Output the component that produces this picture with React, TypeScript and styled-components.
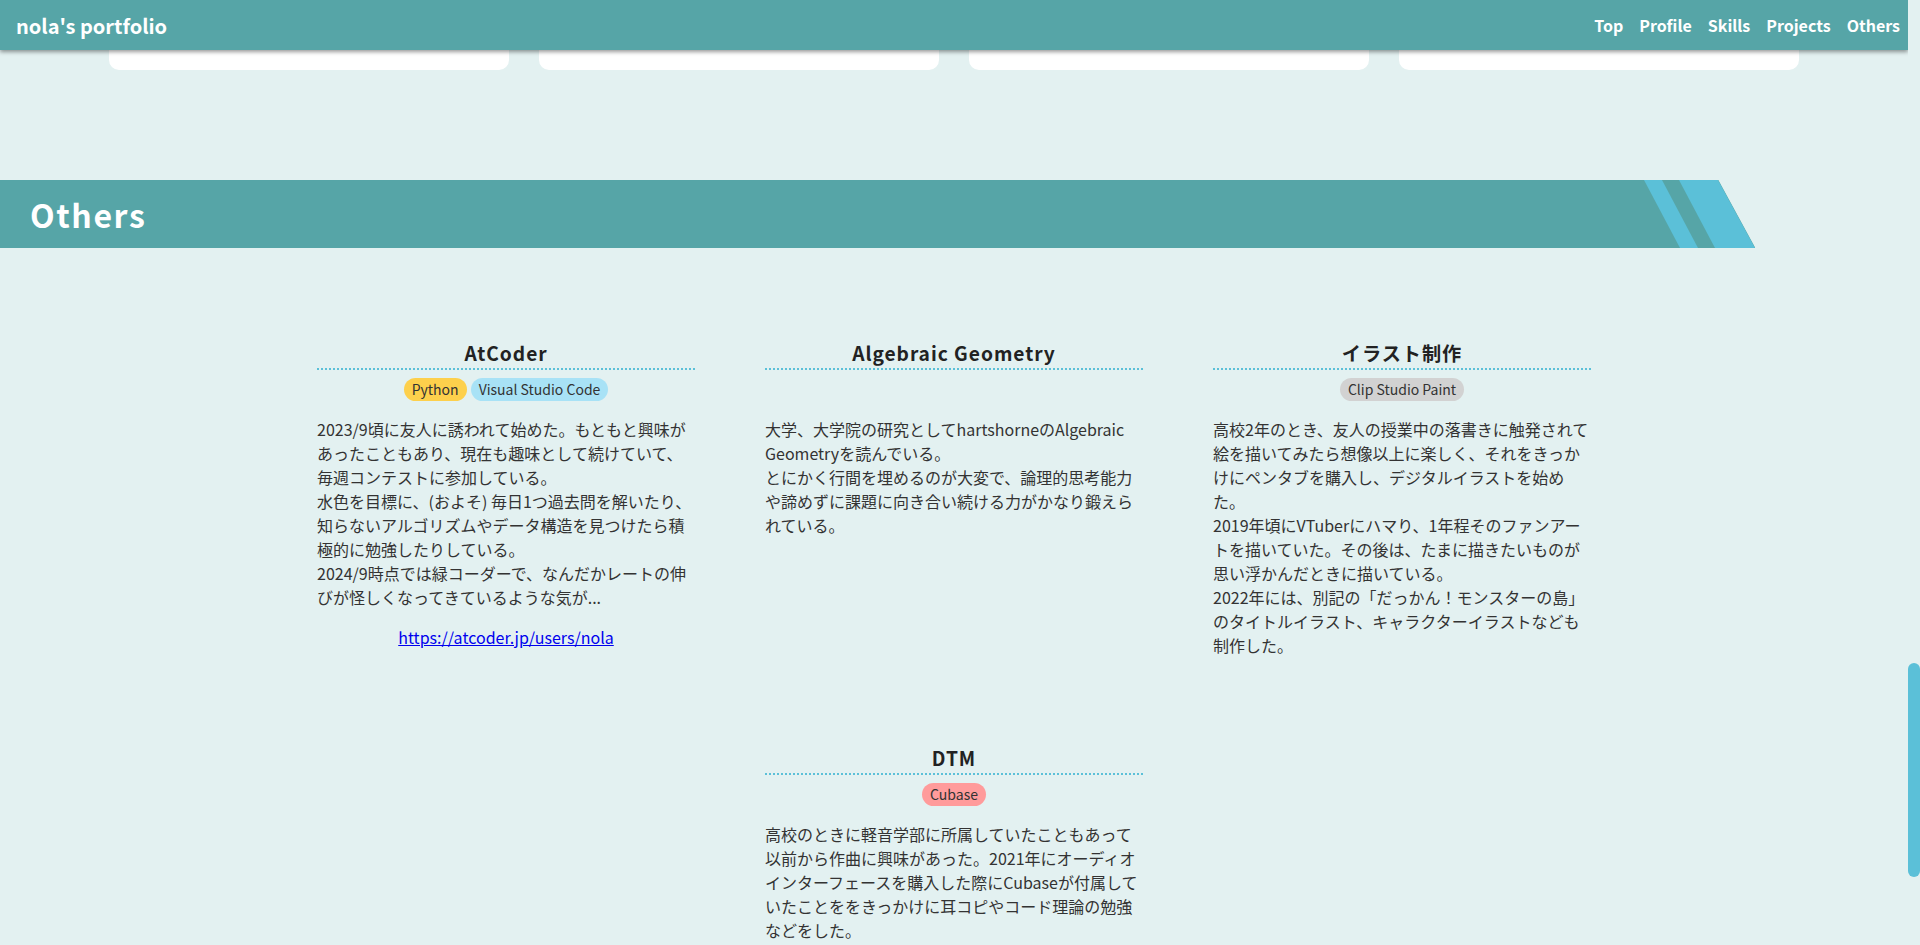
import React from "react";
import styled, { createGlobalStyle } from "styled-components";

const TEAL = "#56a5a7";
const BLUE = "#5bc0d8";
const BG = "#e3f1f1";

const GlobalStyle = createGlobalStyle`
  html, body {
    margin: 0;
    padding: 0;
    height: 100%;
    overflow: hidden;
    background: ${BG};
  }
  body {
    font-family: "Noto Sans CJK JP", "Noto Sans", sans-serif;
    color: #333;
  }
  #root { height: 100%; }
  * { box-sizing: border-box; }
`;

const Frame = styled.div`
  display: flex;
  height: 100vh;
  overflow: hidden;
  background: ${BG};
`;

const Page = styled.main`
  flex: 1;
  min-width: 0;
  overflow: hidden;
`;

const ScrollTrack = styled.div`
  flex: none;
  width: 12px;
  background: ${BG};
`;

const Thumb = styled.div<{ $top: number; $size: number }>`
  margin-top: ${(p) => p.$top}px;
  height: ${(p) => p.$size}px;
  border-radius: 6px;
  background: ${BLUE};
`;

const Header = styled.header`
  position: relative;
  z-index: 2;
  height: 50px;
  display: flex;
  align-items: center;
  justify-content: space-between;
  padding-left: 16px;
  background: ${TEAL};
  box-shadow: 0 2px 4px rgba(0, 0, 0, 0.4);
`;

const Brand = styled.div`
  color: #fff;
  font-size: 20px;
  font-weight: 700;
`;

const Nav = styled.nav`
  display: flex;
`;

const NavLink = styled.a`
  color: #fff;
  font-size: 16px;
  font-weight: 700;
  padding: 0 8px;
  text-decoration: none;
`;

const ProjectsTail = styled.div`
  display: grid;
  grid-template-columns: repeat(4, 400px);
  gap: 30px;
  justify-content: center;
`;

const ProjectCardEnd = styled.div`
  height: 20px;
  background: #fff;
  border-radius: 0 0 10px 10px;
`;

const Section = styled.section`
  margin-top: 110px;
  padding-bottom: 110px;
`;

const Band = styled.div`
  position: relative;
  width: 92%;
  height: 68px;
  display: flex;
  align-items: center;
  padding-left: 30px;
  background: ${TEAL};
  clip-path: polygon(0 0, calc(100% - 37px) 0, 100% 100%, 0 100%);
`;

const BandTitle = styled.h2`
  margin: 0;
  color: #fff;
  font-size: 32px;
  font-weight: 700;
  letter-spacing: 0.05em;
  line-height: 1;
`;

const Stripes = styled.svg`
  position: absolute;
  top: 0;
  right: 0;
  width: 111px;
  height: 68px;
`;

const OthersList = styled.div`
  margin: 90px auto 0;
  width: 1274px;
  display: flex;
  flex-wrap: wrap;
  justify-content: center;
  gap: 70px;
`;

const Card = styled.article`
  width: 378px;
`;

const CardTitle = styled.h3`
  margin: 0;
  font-size: 19.2px;
  line-height: 30px;
  font-weight: 700;
  letter-spacing: 0.05em;
  text-align: center;
  color: #222;
  border-bottom: 2px dotted ${BLUE};
`;

const Tags = styled.div`
  margin-top: 8px;
  min-height: 23px;
  display: flex;
  justify-content: center;
  gap: 4px;
`;

const Tag = styled.span<{ $color: string }>`
  display: inline-block;
  padding: 0 8px;
  font-size: 14px;
  line-height: 23px;
  border-radius: 12px;
  color: #333;
  background: ${(p) => p.$color};
`;

const Text = styled.p`
  margin: 16px 0;
  font-size: 16px;
  line-height: 24px;
  color: #333;
`;

const LinkLine = styled(Text)`
  text-align: center;
  a {
    color: #0000ee;
    text-decoration: underline;
  }
`;

const TAG_COLORS: Record<string, string> = {
  Python: "#fdd04c",
  "Visual Studio Code": "#a8e2f6",
  "Clip Studio Paint": "#d2d2d2",
  Cubase: "#ff9b9b",
};

type Other = {
  title: string;
  tags: string[];
  lines: string[];
  link?: string;
};

const OTHERS: Other[] = [
  {
    title: "AtCoder",
    tags: ["Python", "Visual Studio Code"],
    lines: [
      "2023/9頃に友人に誘われて始めた。もともと興味があったこともあり、現在も趣味として続けていて、毎週コンテストに参加している。",
      "水色を目標に、(およそ) 毎日1つ過去問を解いたり、知らないアルゴリズムやデータ構造を見つけたら積極的に勉強したりしている。",
      "2024/9時点では緑コーダーで、なんだかレートの伸びが怪しくなってきているような気が...",
    ],
    link: "https://atcoder.jp/users/nola",
  },
  {
    title: "Algebraic Geometry",
    tags: [],
    lines: [
      "大学、大学院の研究としてhartshorneのAlgebraic Geometryを読んでいる。",
      "とにかく行間を埋めるのが大変で、論理的思考能力や諦めずに課題に向き合い続ける力がかなり鍛えられている。",
    ],
  },
  {
    title: "イラスト制作",
    tags: ["Clip Studio Paint"],
    lines: [
      "高校2年のとき、友人の授業中の落書きに触発されて絵を描いてみたら想像以上に楽しく、それをきっかけにペンタブを購入し、デジタルイラストを始めた。",
      "2019年頃にVTuberにハマり、1年程そのファンアートを描いていた。その後は、たまに描きたいものが思い浮かんだときに描いている。",
      "2022年には、別記の「だっかん！モンスターの島」のタイトルイラスト、キャラクターイラストなども制作した。",
    ],
  },
  {
    title: "DTM",
    tags: ["Cubase"],
    lines: [
      "高校のときに軽音学部に所属していたこともあって以前から作曲に興味があった。2021年にオーディオインターフェースを購入した際にCubaseが付属していたことををきっかけに耳コピやコード理論の勉強などをした。",
    ],
  },
];

function SectionHeading({ title }: { title: string }) {
  return (
    <Band>
      <BandTitle>{title}</BandTitle>
      <Stripes viewBox="0 0 111 68" aria-hidden="true">
        <polygon points="0,0 18,0 54,68 36,68" fill={BLUE} />
        <polygon points="35,0 74,0 111,68 71,68" fill={BLUE} />
      </Stripes>
    </Band>
  );
}

export default function App() {
  return (
    <>
      <GlobalStyle />
      <Frame>
        <Page>
          <Header>
            <Brand>nola's portfolio</Brand>
            <Nav>
              {["Top", "Profile", "Skills", "Projects", "Others"].map((n) => (
                <NavLink key={n} href={`#${n.toLowerCase()}`}>
                  {n}
                </NavLink>
              ))}
            </Nav>
          </Header>

          <ProjectsTail>
            {[0, 1, 2, 3].map((i) => (
              <ProjectCardEnd key={i} />
            ))}
          </ProjectsTail>

          <Section id="others">
            <SectionHeading title="Others" />
            <OthersList>
              {OTHERS.map((o) => (
                <Card key={o.title}>
                  <CardTitle>{o.title}</CardTitle>
                  <Tags>
                    {o.tags.map((t) => (
                      <Tag key={t} $color={TAG_COLORS[t]}>
                        {t}
                      </Tag>
                    ))}
                  </Tags>
                  <Text>
                    {o.lines.map((l, i) => (
                      <React.Fragment key={i}>
                        {i > 0 && <br />}
                        {l}
                      </React.Fragment>
                    ))}
                  </Text>
                  {o.link && (
                    <LinkLine>
                      <a href={o.link}>{o.link}</a>
                    </LinkLine>
                  )}
                </Card>
              ))}
            </OthersList>
          </Section>
        </Page>
        <ScrollTrack>
          <Thumb $top={663} $size={214} />
        </ScrollTrack>
      </Frame>
    </>
  );
}
